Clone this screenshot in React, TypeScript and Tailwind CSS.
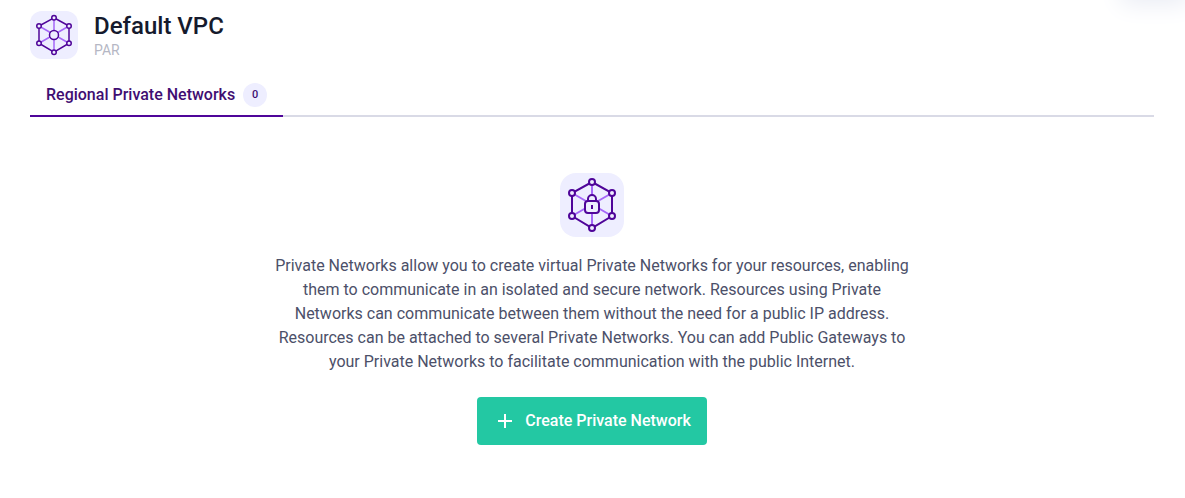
import type { ReactNode } from "react";

const nodes = [
  [32, 9],
  [52, 20],
  [52, 43],
  [32, 55],
  [12, 43],
  [12, 20],
];

function NetworkIcon({ className, children }: { className: string; children: ReactNode }) {
  return (
    <svg viewBox="0 0 64 64" fill="none" className={className} aria-hidden="true">
      <path d="M32 9V55M12 20L52 43M52 20L12 43" stroke="#a567f8" strokeWidth="2" />
      <path d="M32 9L52 20V43L32 55L12 43V20Z" stroke="#4f0599" strokeWidth="2" />
      {nodes.map(([x, y]) => (
        <circle key={`${x}-${y}`} cx={x} cy={y} r="3" fill="#eeeeff" stroke="#4f0599" strokeWidth="2" />
      ))}
      {children}
    </svg>
  );
}

export default function App() {
  return (
    <div className="relative overflow-hidden bg-white pt-[11px] pr-[31px] pb-[53px] pl-[30px] font-[Roboto,sans-serif]">
      <div className="absolute -top-10 right-0 h-10 w-[60px] shadow-[0_0_24px_4px_#e9ecf4]" aria-hidden="true" />
      <header className="flex items-start gap-4">
        <NetworkIcon className="size-12 shrink-0 rounded-xl bg-[#eeeeff]">
          <circle cx="32" cy="32" r="6" fill="#eeeeff" stroke="#4f0599" strokeWidth="2" />
        </NetworkIcon>
        <div className="pt-px">
          <h1 className="text-2xl leading-7 font-medium text-[#151a2d]">Default VPC</h1>
          <p className="text-sm leading-5 text-[#b5b7c4]">PAR</p>
        </div>
      </header>

      <nav className="mt-[15px] flex border-b-2 border-[#d9dae6]" role="tablist" aria-label="VPC sections">
        <button
          type="button"
          role="tab"
          aria-selected="true"
          className="-mb-0.5 flex items-center gap-2 border-b-2 border-[#4f0599] px-4 py-2 text-base leading-6 font-medium text-[#3f0e72]"
        >
          Regional Private Networks
          <span className="flex size-6 items-center justify-center rounded-full bg-[#eeeeff] text-[11px] font-medium">
            0
          </span>
        </button>
      </nav>

      <main className="mt-14 flex flex-col items-center">
        <NetworkIcon className="size-16 rounded-2xl bg-[#eeeeff]">
          <path d="M28 28V26A4 4 0 0 1 36 26V28" fill="#eeeeff" stroke="#4f0599" strokeWidth="2" />
          <rect x="25" y="28" width="14" height="12" rx="3" fill="#eeeeff" stroke="#4f0599" strokeWidth="2" />
          <path d="M32 32V36" stroke="#4f0599" strokeWidth="2" />
        </NetworkIcon>
        <p className="mt-[17px] max-w-[640px] text-center text-base leading-6 text-[#4c5069]">
          Private Networks allow you to create virtual Private Networks for your resources, enabling them to
          communicate in an isolated and secure network. Resources using Private Networks can communicate between
          them without the need for a public IP address. Resources can be attached to several Private Networks. You
          can add Public Gateways to your Private Networks to facilitate communication with the public Internet.
        </p>
        <button
          type="button"
          className="mt-[23px] flex h-12 items-center gap-2 rounded bg-[#23c8a3] px-4 text-base font-medium text-white"
        >
          <svg viewBox="0 0 24 24" className="size-6" fill="none" stroke="currentColor" strokeWidth="2" aria-hidden="true">
            <path d="M12 5V19M5 12H19" />
          </svg>
          Create Private Network
        </button>
      </main>
    </div>
  );
}
